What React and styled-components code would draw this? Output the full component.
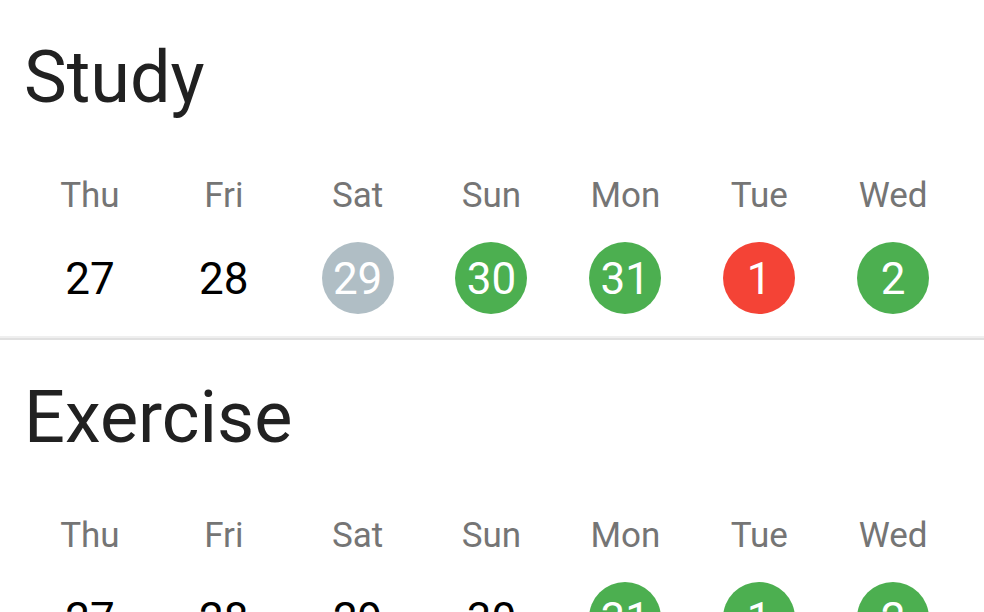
import React from 'react';
import styled, { createGlobalStyle } from 'styled-components';

const GlobalStyle = createGlobalStyle`
    html, body {
        margin: 0;
        padding: 0;
        background: #ffffff;
        font-family: Roboto, "Noto Sans", sans-serif;
        overflow: hidden;
    }
`

const Page = styled.div`
    width: 984px;
    height: 612px;
    overflow: hidden;
    background: #ffffff;
`

const Section = styled.section`
    padding: 0 24px 0 23px;
`

const Title = styled.h1`
    margin: 0;
    padding-top: 36px;
    padding-left: 1px;
    font-size: 72px;
    line-height: 84px;
    font-weight: 400;
    color: #212121;
`

const Week = styled.div`
    display: grid;
    grid-template-columns: repeat(7, 1fr);
    margin-top: 55px;
`

const DayColumn = styled.div`
    display: flex;
    flex-direction: column;
    align-items: center;
`

const DayName = styled.span`
    font-size: 35px;
    line-height: 42px;
    color: #757575;
`

const DateBubble = styled.div`
    margin-top: 25px;
    width: 72px;
    height: 72px;
    border-radius: 50%;
    display: flex;
    align-items: center;
    justify-content: center;
    box-sizing: border-box;
    padding-top: 2px;
    font-size: 44px;
    line-height: 72px;
    background: ${p => p.$bg || 'transparent'};
    color: ${p => (p.$bg ? '#ffffff' : '#000000')};
`

const Divider = styled.div`
    margin-top: 22px;
    height: 2px;
    background: #efefef;
    border-bottom: 2px solid #e0e0e0;
`

const COLORS = {
    skip: '#b0bec5',
    done: '#4caf50',
    miss: '#f44336',
};

const days = ['Thu', 'Fri', 'Sat', 'Sun', 'Mon', 'Tue', 'Wed'];
const dates = [27, 28, 29, 30, 31, 1, 2];

const habits = [
    { name: 'Study', marks: [null, null, 'skip', 'done', 'done', 'miss', 'done'] },
    { name: 'Exercise', marks: [null, null, null, null, 'done', 'done', 'done'] },
];

function HabitWeek({ habit, last }) {
    return (
        <>
            <Section>
                <Title>{habit.name}</Title>
                <Week>
                    {days.map((d, i) => (
                        <DayColumn key={d}>
                            <DayName>{d}</DayName>
                            <DateBubble $bg={habit.marks[i] ? COLORS[habit.marks[i]] : null}>
                                {dates[i]}
                            </DateBubble>
                        </DayColumn>
                    ))}
                </Week>
            </Section>
            {!last && <Divider />}
        </>
    );
}

export default function App() {
    return (
        <Page>
            <GlobalStyle />
            {habits.map((h, i) => (
                <HabitWeek key={h.name} habit={h} last={i === habits.length - 1} />
            ))}
        </Page>
    );
}
